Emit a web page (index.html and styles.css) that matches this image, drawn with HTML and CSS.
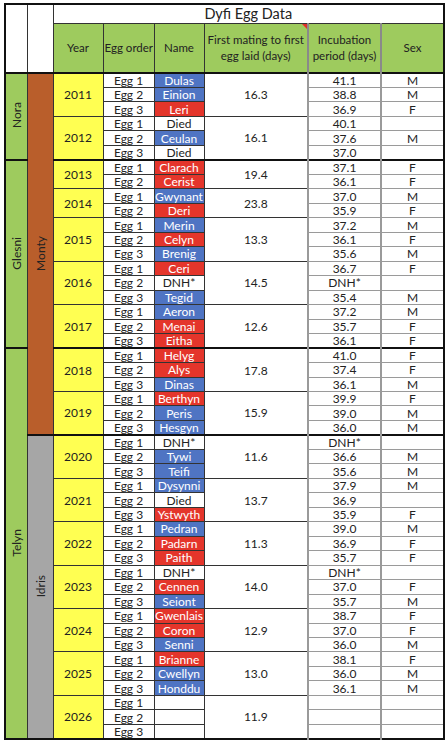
FILE: index.html
```html
<!DOCTYPE html>
<html lang="en">
<head>
    <meta charset="UTF-8">
    <meta name="viewport" content="width=device-width, initial-scale=1.0">
    <title>Dyfi Egg Data</title>
    <link rel="stylesheet" href="styles.css">
</head>
<body>
    <div class="sheet">
        <table class="eggs">
            <colgroup>
                <col class="c-fem">
                <col class="c-male">
                <col class="c-year">
                <col class="c-egg">
                <col class="c-name">
                <col class="c-mate">
                <col class="c-inc">
                <col class="c-sex">
            </colgroup>
            <thead>
                <tr class="title-row">
                    <th rowspan="2" class="blank"></th>
                    <th rowspan="2" class="blank"></th>
                    <th colspan="6" class="title">Dyfi Egg Data</th>
                </tr>
                <tr class="head-row">
                    <th>Year</th>
                    <th class="one-line">Egg order</th>
                    <th>Name</th>
                    <th class="noted">First mating to first egg laid (days)<span class="comment-flag"></span></th>
                    <th class="inc">Incubation period (days)</th>
                    <th class="sex">Sex</th>
                </tr>
            </thead>
            <tbody id="egg-rows"></tbody>
        </table>
    </div>

    <script>
        // one entry per season: [name, sex, incubation]
        const seasons = [
            { fem: 'Nora', male: 'Monty', year: 2011, mating: '16.3', eggs: [['Dulas', 'M', '41.1'], ['Einion', 'M', '38.8'], ['Leri', 'F', '36.9']] },
            { fem: 'Nora', male: 'Monty', year: 2012, mating: '16.1', eggs: [['Died', '', '40.1'], ['Ceulan', 'M', '37.6'], ['Died', '', '37.0']] },
            { fem: 'Glesni', male: 'Monty', year: 2013, mating: '19.4', eggs: [['Clarach', 'F', '37.1'], ['Cerist', 'F', '36.1']] },
            { fem: 'Glesni', male: 'Monty', year: 2014, mating: '23.8', eggs: [['Gwynant', 'M', '37.0'], ['Deri', 'F', '35.9']] },
            { fem: 'Glesni', male: 'Monty', year: 2015, mating: '13.3', eggs: [['Merin', 'M', '37.2'], ['Celyn', 'F', '36.1'], ['Brenig', 'M', '35.6']] },
            { fem: 'Glesni', male: 'Monty', year: 2016, mating: '14.5', eggs: [['Ceri', 'F', '36.7'], ['DNH*', '', 'DNH*'], ['Tegid', 'M', '35.4']] },
            { fem: 'Glesni', male: 'Monty', year: 2017, mating: '12.6', eggs: [['Aeron', 'M', '37.2'], ['Menai', 'F', '35.7'], ['Eitha', 'F', '36.1']] },
            { fem: 'Telyn', male: 'Monty', year: 2018, mating: '17.8', eggs: [['Helyg', 'F', '41.0'], ['Alys', 'F', '37.4'], ['Dinas', 'M', '36.1']] },
            { fem: 'Telyn', male: 'Monty', year: 2019, mating: '15.9', eggs: [['Berthyn', 'F', '39.9'], ['Peris', 'M', '39.0'], ['Hesgyn', 'M', '36.0']] },
            { fem: 'Telyn', male: 'Idris', year: 2020, mating: '11.6', eggs: [['DNH*', '', 'DNH*'], ['Tywi', 'M', '36.6'], ['Teifi', 'M', '35.6']] },
            { fem: 'Telyn', male: 'Idris', year: 2021, mating: '13.7', eggs: [['Dysynni', 'M', '37.9'], ['Died', '', '36.9'], ['Ystwyth', 'F', '35.9']] },
            { fem: 'Telyn', male: 'Idris', year: 2022, mating: '11.3', eggs: [['Pedran', 'M', '39.0'], ['Padarn', 'F', '36.9'], ['Paith', 'F', '35.7']] },
            { fem: 'Telyn', male: 'Idris', year: 2023, mating: '14.0', eggs: [['DNH*', '', 'DNH*'], ['Cennen', 'F', '37.0'], ['Seiont', 'M', '35.7']] },
            { fem: 'Telyn', male: 'Idris', year: 2024, mating: '12.9', eggs: [['Gwenlais', 'F', '38.7'], ['Coron', 'F', '37.0'], ['Senni', 'M', '36.0']] },
            { fem: 'Telyn', male: 'Idris', year: 2025, mating: '13.0', eggs: [['Brianne', 'F', '38.1'], ['Cwellyn', 'M', '36.0'], ['Honddu', 'M', '36.1']] },
            { fem: 'Telyn', male: 'Idris', year: 2026, mating: '11.9', eggs: [['', '', ''], ['', '', ''], ['', '', '']] }
        ];

        function rowsFor(key, value) {
            return seasons
                .filter(s => s[key] === value)
                .reduce((n, s) => n + s.eggs.length, 0);
        }

        function renderRows() {
            let html = '';
            let lastFem = null;
            let lastMale = null;

            seasons.forEach(s => {
                const newFem = s.fem !== lastFem;
                const newMale = s.male !== lastMale;

                s.eggs.forEach(([name, sex, inc], i) => {
                    const first = i === 0;
                    let cls = first ? 'year-start' : '';
                    if (first && (newFem || newMale)) cls += ' group-start';

                    let row = `<tr class="${cls}">`;
                    if (first && newFem) {
                        row += `<td class="parent fem" rowspan="${rowsFor('fem', s.fem)}"><span class="vlabel">${s.fem}</span></td>`;
                    }
                    if (first && newMale) {
                        row += `<td class="parent male male-${s.male.toLowerCase()}" rowspan="${rowsFor('male', s.male)}"><span class="vlabel">${s.male}</span></td>`;
                    }
                    if (first) {
                        row += `<td class="year" rowspan="${s.eggs.length}">${s.year}</td>`;
                    }
                    row += `<td class="egg">Egg ${i + 1}</td>`;
                    row += `<td class="name ${sex ? 'sex-' + sex.toLowerCase() : ''}">${name}</td>`;
                    if (first) {
                        row += `<td class="mate" rowspan="${s.eggs.length}">${s.mating}</td>`;
                    }
                    row += `<td class="inc">${inc}</td>`;
                    row += `<td class="sex">${sex}</td>`;
                    row += '</tr>';
                    html += row;
                });

                lastFem = s.fem;
                lastMale = s.male;
            });

            document.getElementById('egg-rows').innerHTML = html;
        }

        renderRows();
    </script>
</body>
</html>
```

FILE: styles.css
```css
body {
    margin: 0;
    background: #fff;
    font-family: Lato, "Open Sans", sans-serif;
    color: #222;
}
.sheet {
    padding: 3px 0 0 4px;
}
.eggs {
    border-collapse: collapse;
    table-layout: fixed;
    width: 439px;
    border: 2px solid #111;
    font-size: 12px;
    line-height: 13px;
}
.c-fem { width: 22px; }
.c-male { width: 26px; }
.c-year { width: 50px; }
.c-egg { width: 51px; }
.c-name { width: 50px; }
.c-mate { width: 104px; }
.c-inc { width: 73px; }
.c-sex { width: 63px; }

.eggs th,
.eggs td {
    border: 1px solid #333;
    padding: 0;
    text-align: center;
    vertical-align: middle;
    font-weight: 400;
    overflow: hidden;
    white-space: nowrap;
}
.title-row {
    height: 19px;
}
.title {
    background: #fff;
    font-size: 14.5px;
}
.blank {
    background: #fff;
}
.head-row {
    height: 50px;
}
.head-row th {
    background: #9ecb5e;
    white-space: normal;
    font-size: 11.5px;
    line-height: 16px;
    padding: 0 1px;
}
.head-row th.one-line {
    white-space: nowrap;
}
.head-row th.inc,
.head-row th.sex {
    border-left: 2px solid #8a8a8a;
}
.noted {
    position: relative;
}
.comment-flag {
    position: absolute;
    top: 0;
    right: 0;
    width: 0;
    height: 0;
    border-top: 5px solid #e0302a;
    border-left: 5px solid transparent;
}

.eggs tbody tr {
    height: 14.48px;
}
.eggs tbody tr.group-start td {
    border-top: 2px solid #111;
}
.fem {
    background: #9ecb5e;
}
.male-monty {
    background: #b95e2b;
}
.male-idris {
    background: #a6a6a6;
}
.vlabel {
    display: inline-block;
    writing-mode: vertical-rl;
    transform: rotate(180deg);
    font-size: 12px;
}
.year {
    background: #ffff52;
}
.egg,
.name,
.mate {
    background: #fff;
}
.name.sex-m {
    background: #4f74c3;
    color: #fff;
}
.name.sex-f {
    background: #e4352b;
    color: #fff;
}
.eggs td.inc,
.eggs td.sex {
    border-top-color: #9a9a9a;
    border-bottom-color: #9a9a9a;
    border-left: 2px solid #9a9a9a;
}
.eggs tr.year-start td.inc,
.eggs tr.year-start td.sex {
    border-top-color: #555;
}
.eggs tr.group-start td.inc,
.eggs tr.group-start td.sex {
    border-top: 2px solid #111;
}
```
